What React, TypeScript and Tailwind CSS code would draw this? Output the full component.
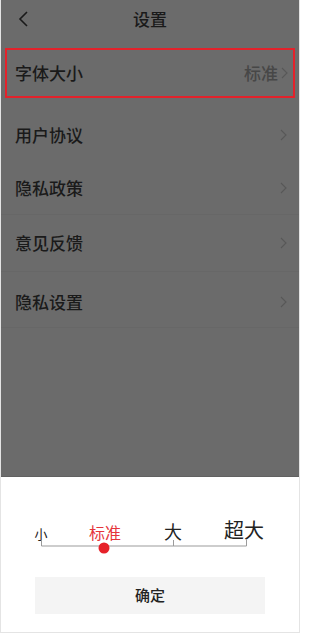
import React from 'react';

const font = { fontFamily: '"Noto Sans CJK SC", "Noto Sans", sans-serif' };

const Chevron: React.FC<{ className?: string }> = ({ className }) => (
  <svg width="7" height="12" viewBox="0 0 7 12" className={className} fill="none">
    <path d="M1 1l5 5-5 5" stroke="currentColor" strokeWidth="1.1" />
  </svg>
);

interface Row {
  label: string;
  height: string;
  pad: string;
  line: boolean;
}

const rows: Row[] = [
  { label: '用户协议', height: 'h-[63px]', pad: 'pt-[10px]', line: false },
  { label: '隐私政策', height: 'h-[54px]', pad: 'pt-0', line: true },
  { label: '意见反馈', height: 'h-[57px]', pad: 'pt-0', line: true },
  { label: '隐私设置', height: 'h-[56px]', pad: 'pt-[4px]', line: true },
];

const sizes = [
  { label: '小', x: 40, cls: 'text-[13px] text-[#222]' },
  { label: '标准', x: 104, cls: 'text-[16px] text-[#e5343b]' },
  { label: '大', x: 172, cls: 'text-[18px] text-[#222]' },
  { label: '超大', x: 243, cls: 'text-[20px] text-[#222]' },
];

export default function App() {
  return (
    <div style={font} className="w-[300px] h-[633px] flex flex-col border-x border-b border-[#e4e4e4] overflow-hidden">
      {/* dimmed settings page */}
      <div className="flex-1 bg-[#6b6b6b] flex flex-col border-b border-[#616161]">
        <div className="h-[40px] relative flex items-start justify-center pt-[8px]">
          <svg width="12" height="16" viewBox="0 0 12 16" fill="none" className="absolute left-[16px] top-[11px]">
            <path d="M10 1L3 8l7 7" stroke="#1a1a1a" strokeWidth="1.6" />
          </svg>
          <span className="text-[17px] text-[#1a1a1a] font-medium leading-[22px]">设置</span>
        </div>

        <div className="mt-[8px] px-[4px]">
          <div className="h-[50px] border-2 border-[#e3222b] flex items-center justify-between pl-[8px] pr-[5px]">
            <span className="text-[17px] text-[#1a1a1a] font-medium">字体大小</span>
            <div className="flex items-center gap-[3px] text-[#474747]">
              <span className="text-[17px] font-medium">标准</span>
              <Chevron className="text-[#585858]" />
            </div>
          </div>
        </div>

        {rows.map((r) => (
          <div key={r.label} className={`${r.height} ${r.pad} flex items-center justify-between pl-[14px] pr-[12px] ${r.line ? 'border-b border-[#676767]' : ''}`}>
            <span className="text-[17px] text-[#1a1a1a] font-medium">{r.label}</span>
            <Chevron className="text-[#585858]" />
          </div>
        ))}
      </div>

      {/* font size sheet */}
      <div className="h-[155px] bg-white flex flex-col">
        <div className="relative h-[80px]">
          {sizes.map((s) => (
            <span
              key={s.label}
              className={`absolute bottom-[17px] -translate-x-1/2 leading-none ${s.cls}`}
              style={{ left: s.x }}
            >
              {s.label}
            </span>
          ))}
          <svg width="300" height="80" className="absolute left-0 top-0" fill="none">
            <path d="M40.5 63v6H245.5v-6M172.5 63v6" stroke="#9b9b9b" strokeWidth="1" />
            <circle cx="103" cy="71" r="5.5" fill="#e62129" />
          </svg>
        </div>
        <div className="mt-[20px] mx-[34px] h-[37px] bg-[#f4f4f4] flex items-center justify-center">
          <span className="text-[15px] text-[#222] font-medium">确定</span>
        </div>
      </div>
    </div>
  );
}
